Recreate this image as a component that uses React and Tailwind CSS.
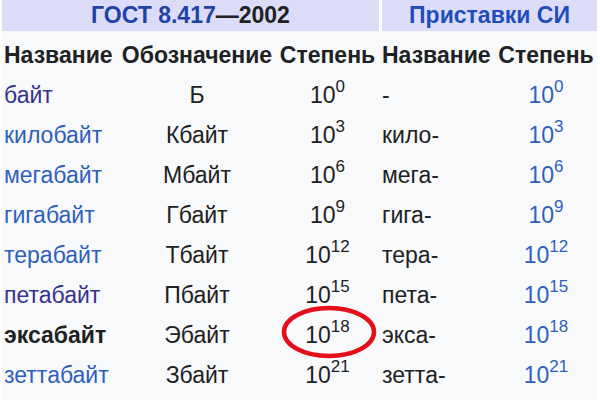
import React from 'react';

const rows = [
  { name: 'байт', sym: 'Б', p: '0', pre: '-', visited: true },
  { name: 'килобайт', sym: 'Кбайт', p: '3', pre: 'кило-' },
  { name: 'мегабайт', sym: 'Мбайт', p: '6', pre: 'мега-' },
  { name: 'гигабайт', sym: 'Гбайт', p: '9', pre: 'гига-' },
  { name: 'терабайт', sym: 'Тбайт', p: '12', pre: 'тера-' },
  { name: 'петабайт', sym: 'Пбайт', p: '15', pre: 'пета-', visited: true },
  { name: 'эксабайт', sym: 'Эбайт', p: '18', pre: 'экса-', self: true },
  { name: 'зеттабайт', sym: 'Збайт', p: '21', pre: 'зетта-' },
  { name: 'йоттабайт', sym: 'Йбайт', p: '24', pre: 'йотта-' },
];

function Pow({ p }) {
  return (
    <span>
      10<sup className="text-[17px] -top-[0.62em]">{p}</sup>
    </span>
  );
}

export default function App() {
  return (
    <div
      className="relative w-[600px] h-[400px] overflow-hidden bg-white text-[#202122]"
      style={{ fontFamily: '"Liberation Sans", Arial, sans-serif' }}
    >
      <table className="ml-[2px] w-[595px] table-fixed border-separate border-spacing-0 bg-[#f8f9fa] text-[23px] leading-none">
        <colgroup>
          <col className="w-[116px]" />
          <col className="w-[158px]" />
          <col className="w-[103px]" />
          <col className="w-[116px]" />
          <col className="w-[102px]" />
        </colgroup>
        <thead>
          <tr className="h-[31px]">
            <th colSpan={3} className="bg-[#dcdcf8] text-center font-bold">
              <span className="text-[#1d43a6]">ГОСТ 8.417</span>—2002
            </th>
            <th colSpan={2} className="border-l-[3px] border-white bg-[#dcdcf8] text-center font-bold text-[#1f4ebb]">
              Приставки СИ
            </th>
          </tr>
          <tr className="h-[44px]">
            <th className="pl-[2px] pt-[4px] text-left font-bold">Название</th>
            <th className="pt-[4px] text-center font-bold">Обозначение</th>
            <th className="pt-[4px] text-center font-bold">Степень</th>
            <th className="pl-[3px] pt-[4px] text-left font-bold">Название</th>
            <th className="pt-[4px] text-center font-bold">Степень</th>
          </tr>
        </thead>
        <tbody>
          {rows.map(r => (
            <tr key={r.name} className="h-[40px]">
              <td
                className={
                  'pl-[2px] ' +
                  (r.self ? 'font-bold text-[#202122]' : r.visited ? 'text-[#37338e]' : 'text-[#2e5fbd]')
                }
              >
                {r.name}
              </td>
              <td className="text-center">{r.sym}</td>
              <td className="text-center"><Pow p={r.p} /></td>
              <td className="pl-[3px]">{r.pre}</td>
              <td className="text-center text-[#2e5fbd]"><Pow p={r.p} /></td>
            </tr>
          ))}
        </tbody>
      </table>

      <svg className="absolute left-[280px] top-[303px]" width="100" height="58" viewBox="0 0 100 58">
        <ellipse cx="49" cy="29" rx="45" ry="24" fill="none" stroke="#e3101b" strokeWidth="4.5" />
      </svg>
    </div>
  );
}
